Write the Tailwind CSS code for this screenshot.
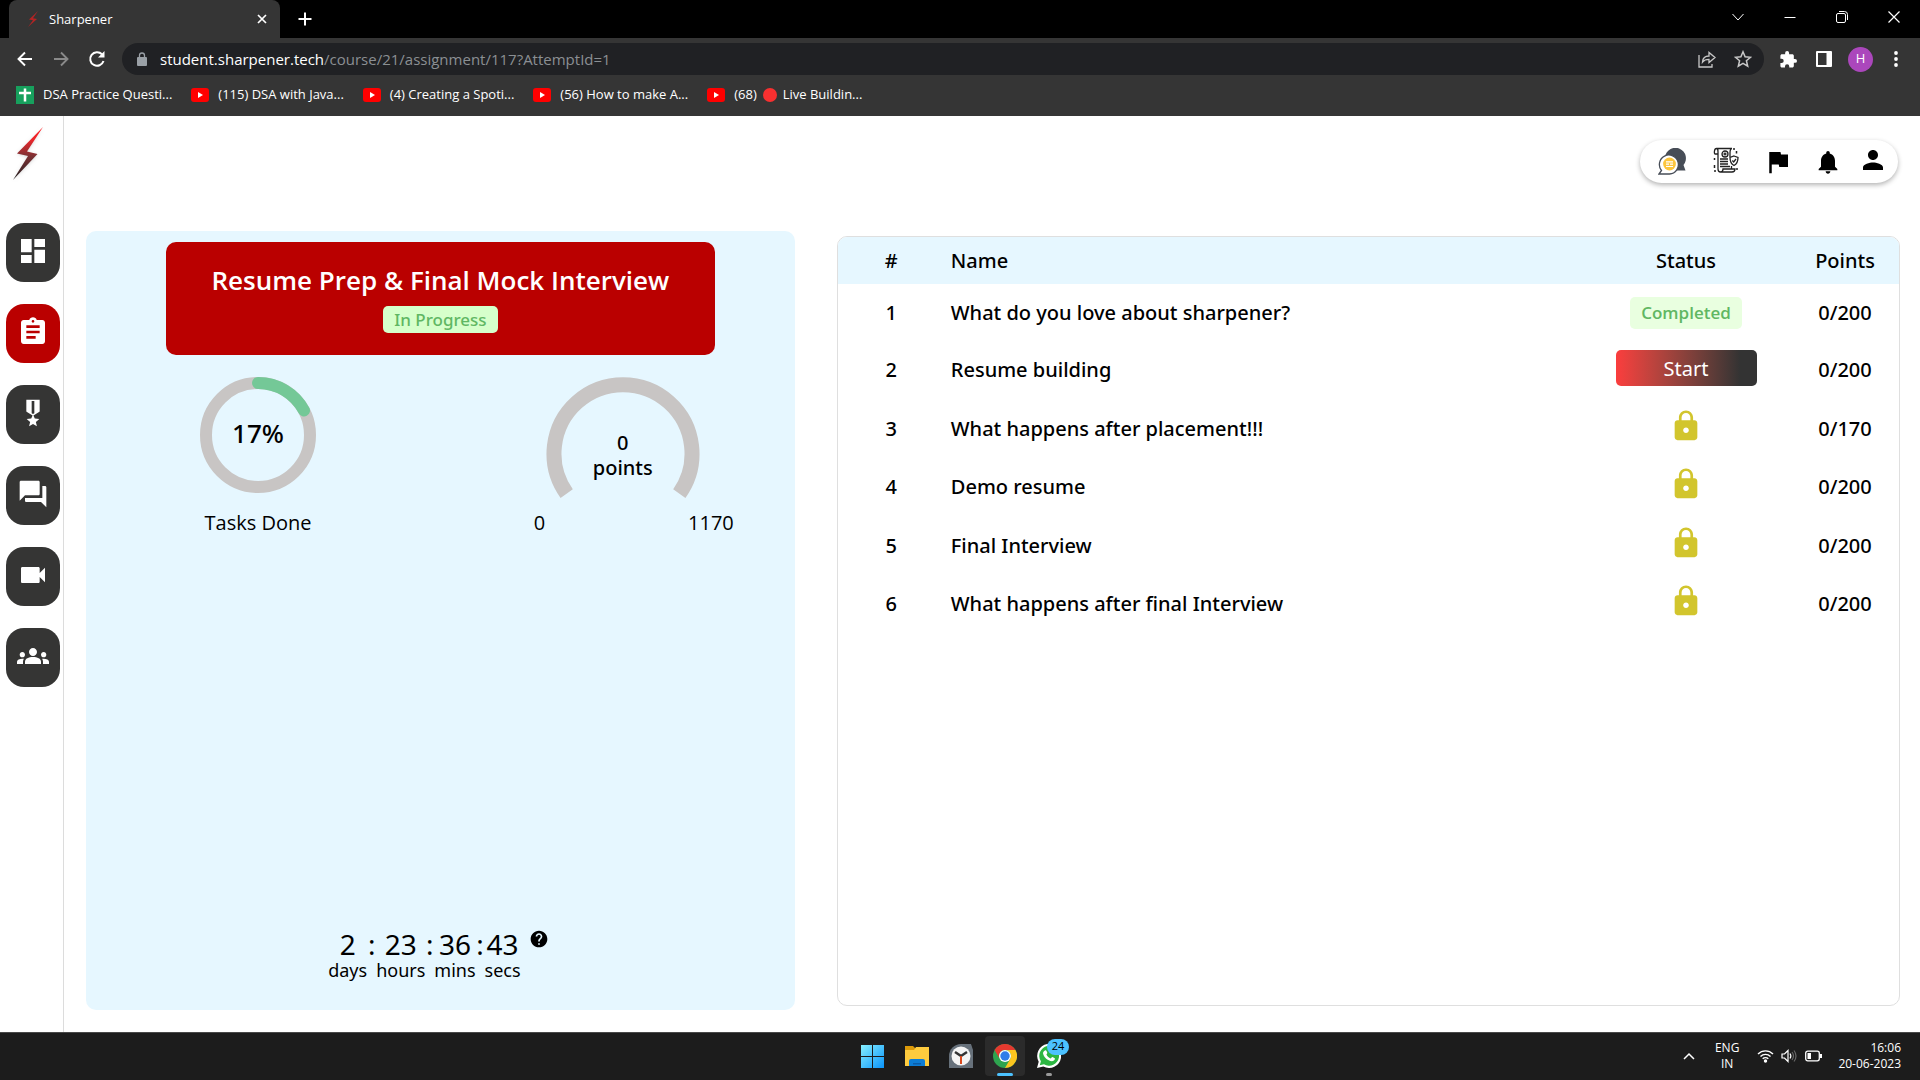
<!DOCTYPE html>
<html lang="en">
<head>
<meta charset="utf-8">
<title>Sharpener</title>
<script src="https://cdn.jsdelivr.net/npm/@tailwindcss/browser@4"></script>
</head>
<body class="flex h-screen flex-col overflow-hidden bg-white font-['Open_Sans','Noto_Sans',sans-serif] text-black">
<svg class="hidden" aria-hidden="true">
  <symbol id="yt" viewBox="0 0 18 14"><rect width="18" height="14" rx="3" fill="#f00"/><path d="M7 4v6l5-3z" fill="#fff"/></symbol>
  <symbol id="lock" viewBox="0 0 24 24"><path d="M18 8h-1V6c0-2.760-2.240-5-5-5S7 3.240 7 6v2H6c-1.100 0-2 .9-2 2v10c0 1.100.9 2 2 2h12c1.100 0 2-.9 2-2V10c0-1.100-.9-2-2-2zm-6 9c-1.100 0-2-.9-2-2s.9-2 2-2 2 .9 2 2-.9 2-2 2zm3.100-9H8.900V6c0-1.710 1.390-3.100 3.100-3.100s3.100 1.390 3.100 3.100v2z"/></symbol>
</svg>

<!-- Browser window -->
<header class="shrink-0 bg-[#353535] text-white">
  <div class="flex h-[38px] items-stretch bg-black pl-[9px]">
    <div class="flex w-[271px] items-center rounded-t-lg bg-[#353535] pl-[18px] pr-[12px]">
      <svg class="h-[18px] w-3" viewBox="0 0 12 18"><path d="M11 1 2 9.500l4 .8L1 17l9-8-4-.8z" fill="#b32424"/></svg>
      <span class="ml-[10px] flex-1 pt-px text-[13px]">Sharpener</span>
      <button aria-label="Close tab"><svg class="size-3" viewBox="0 0 12 12" fill="none" stroke="#fff" stroke-width="1.700"><path d="m2 2 8 8m0-8-8 8"/></svg></button>
    </div>
    <button aria-label="New tab" class="ml-[17px]"><svg class="size-4" viewBox="0 0 16 16" stroke="#fff" stroke-width="2"><path d="M8 1.500v13M1.500 8h13"/></svg></button>
    <div class="ml-auto flex items-center gap-10 pb-[5px] pr-5">
      <button aria-label="Search tabs"><svg class="size-3" viewBox="0 0 12 12" fill="none" stroke="#fff"><path d="m.5 3 5.500 6 5.500-6"/></svg></button>
      <button aria-label="Minimize"><svg class="size-3" viewBox="0 0 12 12" stroke="#fff"><path d="M.5 6.500h11"/></svg></button>
      <button aria-label="Restore"><svg class="size-3" viewBox="0 0 12 12" fill="none" stroke="#fff"><rect x=".5" y="2.500" width="9" height="9" rx="1.500"/><path d="M3 .5h5.500a3 3 0 0 1 3 3V9"/></svg></button>
      <button aria-label="Close"><svg class="size-3" viewBox="0 0 12 12" stroke="#fff" stroke-width="1.200"><path d="m.5.5 11 11m0-11-11 11"/></svg></button>
    </div>
  </div>
  <div class="flex h-[42px] items-center pl-[15px] pr-[16px]">
    <button aria-label="Back" class="mr-4"><svg class="size-5" viewBox="0 0 20 20" fill="none" stroke="#fff" stroke-width="1.900"><path d="M17 10H4M10 3.500 3.500 10l6.500 6.500"/></svg></button>
    <button aria-label="Forward" class="mr-4"><svg class="size-5" viewBox="0 0 20 20" fill="none" stroke="#8a8a8a" stroke-width="1.900"><path d="M3 10h13M10 3.500l6.500 6.500-6.500 6.500"/></svg></button>
    <button aria-label="Reload" class="mr-[15px]"><svg class="size-5" viewBox="0 0 20 20" fill="none" stroke="#fff" stroke-width="2"><path d="M16.500 12A6.800 6.800 0 1 1 15 5.300"/><path d="M17.500 2v6.500H11z" fill="#fff" stroke="none"/></svg></button>
    <div class="flex h-8 flex-1 items-center rounded-full bg-[#202124] pl-[15px] pr-3">
      <svg class="mr-[13px] h-[14px] w-[10px]" viewBox="0 0 10 14"><path d="M2.500 6V3.500a2.500 2.500 0 0 1 5 0V6" fill="none" stroke="#9aa0a6" stroke-width="1.300"/><rect y="5" width="10" height="9" rx="1" fill="#9aa0a6"/></svg>
      <p class="flex-1 text-[15px] text-[#8b8f93]"><span class="text-white">student.sharpener.tech</span>/course/21/assignment/117?AttemptId=1</p>
      <button aria-label="Share" class="mr-[18px]"><svg class="size-[18px]" viewBox="0 0 18 18" fill="none" stroke="#c8c8c8" stroke-width="1.300"><path d="M1 5v12h13v-3M4.500 12c.3-4 2.500-6 6.500-6V2.500l6 5-6 5V9.300c-3 0-5 .7-6.500 2.700z"/></svg></button>
      <button aria-label="Bookmark this page"><svg class="size-[18px]" viewBox="0 0 18 18" fill="none" stroke="#c8c8c8" stroke-width="1.500"><path d="m9 1.800 2.100 5 5.400.5-4.100 3.500 1.300 5.300L9 13.300l-4.700 2.800 1.300-5.300-4.100-3.500 5.400-.5z"/></svg></button>
    </div>
    <button aria-label="Extensions" class="ml-4"><svg class="size-[17px]" viewBox="1.500 1 21.500 21.500" fill="#fff"><path d="M20.500 11H19V7c0-1.100-.9-2-2-2h-4V3.500a2.500 2.500 0 0 0-5 0V5H4c-1.100 0-2 .9-2 2v3.800h1.500a2.700 2.700 0 0 1 0 5.400H2V20c0 1.100.9 2 2 2h3.800v-1.500a2.700 2.700 0 0 1 5.400 0V22H17c1.100 0 2-.9 2-2v-4h1.500a2.500 2.500 0 0 0 0-5z"/></svg></button>
    <button aria-label="Side panel" class="ml-[19px]"><svg class="size-4" viewBox="0 0 16 16"><rect width="16" height="16" rx="1" fill="#fff"/><rect x="2" y="2" width="8.500" height="12" fill="#353535"/></svg></button>
    <button aria-label="Profile" class="ml-4 flex size-[25px] items-center justify-center rounded-full bg-[#ab47bc] text-[13px]">H</button>
    <button aria-label="Menu" class="ml-[15px]"><svg class="size-4" viewBox="0 0 16 16" fill="#fff"><circle cx="8" cy="2" r="1.900"/><circle cx="8" cy="8" r="1.900"/><circle cx="8" cy="14" r="1.900"/></svg></button>
  </div>
  <nav aria-label="Bookmarks" class="flex h-9 items-center gap-[19px] pb-1.5 pl-4 text-[13px]">
    <a href="#" class="flex items-center gap-[9px]"><svg class="size-[18px]" viewBox="0 0 18 18"><path fill="#17a05d" d="M0 0h18v18H0z"/><path d="M9 2.500v13M3 7h12" stroke="#fff" stroke-width="2.500"/></svg>DSA Practice Questi...</a>
    <a href="#" class="flex items-center gap-[9px]"><svg class="h-[14px] w-[18px]"><use href="#yt"/></svg>(115) DSA with Java...</a>
    <a href="#" class="flex items-center gap-[9px]"><svg class="h-[14px] w-[18px]"><use href="#yt"/></svg>(4) Creating a Spoti...</a>
    <a href="#" class="flex items-center gap-[9px]"><svg class="h-[14px] w-[18px]"><use href="#yt"/></svg>(56) How to make A...</a>
    <a href="#" class="flex items-center gap-[9px]"><svg class="h-[14px] w-[18px]"><use href="#yt"/></svg><span class="flex items-center gap-1.5">(68) <i class="size-[14px] rounded-full bg-[#f83030]"></i> Live Buildin...</span></a>
  </nav>
</header>

<div class="flex min-h-0 flex-1">
  <aside class="w-16 shrink-0 border-r border-[#dcdcdc] pl-1.5">
    <a href="#" aria-label="Sharpener home"><svg class="mb-[41px] ml-[6px] mt-[10px] h-14 w-8 drop-shadow" viewBox="0 0 32 56"><defs><linearGradient id="bolt" x1="0" y1="0" x2="0" y2="1"><stop stop-color="#ff1a1f"/><stop offset=".25" stop-color="#e8262b"/><stop offset=".55" stop-color="#7c3033"/><stop offset="1" stop-color="#222"/></linearGradient></defs><path d="M31 1 5 27.500l11 2.500L1 54l24.500-26L15 25.500z" fill="url(#bolt)"/></svg></a>
    <nav aria-label="Main" class="flex flex-col gap-[22px]">
      <a href="#" aria-label="Dashboard" class="flex h-[59px] w-[54px] items-center justify-center rounded-[18px] bg-[#353534] pb-[3px]"><svg class="size-8" viewBox="0 0 24 24" fill="#fff"><path d="M3 13h8V3H3v10zm0 8h8v-6H3v6zm10 0h8V11h-8v10zm0-18v6h8V3h-8z"/></svg></a>
      <a href="#" aria-label="Assignments" class="flex h-[59px] w-[54px] items-center justify-center rounded-[18px] bg-[#ba0000] pb-[3px]"><svg class="size-8" viewBox="0 0 24 24" fill="#fff"><path d="M19 3h-4.180C14.400 1.840 13.300 1 12 1c-1.300 0-2.400.84-2.820 2H5c-1.100 0-2 .9-2 2v14c0 1.100.9 2 2 2h14c1.100 0 2-.9 2-2V5c0-1.100-.9-2-2-2zm-7 0c.55 0 1 .45 1 1s-.45 1-1 1-1-.45-1-1 .45-1 1-1zm2 14H7v-2h7v2zm3-4H7v-2h10v2zm0-4H7V7h10v2z"/></svg></a>
      <a href="#" aria-label="Achievements" class="flex h-[59px] w-[54px] items-center justify-center rounded-[18px] bg-[#353534] pb-[3px]"><svg class="size-8" viewBox="0 0 24 24" fill="#fff"><path d="M17 10.430V2H7v8.430c0 .35.18.68.49.86l4.180 2.510-.99 2.340-3.410.29 2.590 2.240L9.070 22 12 20.230 14.930 22l-.78-3.330 2.590-2.240-3.410-.29-.99-2.340 4.180-2.510c.3-.18.48-.5.48-.86zm-4 1.800-1 .6-1-.6V3h2v9.230z"/></svg></a>
      <a href="#" aria-label="Forum" class="flex h-[59px] w-[54px] items-center justify-center rounded-[18px] bg-[#353534] pb-[3px]"><svg class="size-8" viewBox="0 0 24 24" fill="#fff"><path d="M21 6h-2v9H6v2c0 .55.45 1 1 1h11l4 4V7c0-.55-.45-1-1-1zm-4 6V3c0-.55-.45-1-1-1H3c-.55 0-1 .45-1 1v14l4-4h10c.55 0 1-.45 1-1z"/></svg></a>
      <a href="#" aria-label="Video calls" class="flex h-[59px] w-[54px] items-center justify-center rounded-[18px] bg-[#353534] pb-[3px]"><svg class="size-8" viewBox="0 0 24 24" fill="#fff"><path d="M17 10.500V7c0-.55-.45-1-1-1H4c-.55 0-1 .45-1 1v10c0 .55.45 1 1 1h12c.55 0 1-.45 1-1v-3.500l4 4v-11l-4 4z"/></svg></a>
      <a href="#" aria-label="Groups" class="flex h-[59px] w-[54px] items-center justify-center rounded-[18px] bg-[#353534] pb-[3px]"><svg class="size-8" viewBox="0 0 24 24" fill="#fff"><path d="M12 12.750c1.630 0 3.070.39 4.240.9 1.080.48 1.760 1.560 1.760 2.730V18H6v-1.610c0-1.180.68-2.260 1.760-2.730 1.170-.52 2.610-.91 4.240-.91zM4 13c1.100 0 2-.9 2-2s-.9-2-2-2-2 .9-2 2 .9 2 2 2zm1.130 1.100c-.37-.06-.74-.1-1.130-.1-.99 0-1.930.21-2.780.58C.48 14.900 0 15.620 0 16.430V18h4.500v-1.610c0-.83.23-1.610.63-2.290zM20 13c1.100 0 2-.9 2-2s-.9-2-2-2-2 .9-2 2 .9 2 2 2zm4 3.430c0-.81-.48-1.530-1.220-1.850-.85-.37-1.790-.58-2.780-.58-.39 0-.76.04-1.130.1.4.68.63 1.460.63 2.290V18H24v-1.570zM12 6c1.660 0 3 1.340 3 3s-1.340 3-3 3-3-1.340-3-3 1.340-3 3-3z"/></svg></a>
    </nav>
  </aside>

  <main class="flex min-w-0 flex-1 flex-col pb-[22px] pl-[22px] pr-5 pt-6">
    <div class="mb-12 ml-auto mr-0.5 flex h-[43px] w-[258px] items-center rounded-full bg-white pl-[18px] shadow-[0_2px_5px_rgba(0,0,0,0.3)]">
      <button aria-label="Messages" class="mr-[27px]"><svg class="size-7" viewBox="0 0 28 28"><path d="M7 9A10.500 10.500 0 1 1 25.500 17l2 5.500H17z" fill="#474d57"/><path d="M1 26l2.500-3.500A9.500 9.500 0 1 1 11.500 26z" fill="#fff" stroke="#474d57" stroke-width="1.300"/><circle cx="11.500" cy="16" r="6.400" fill="#fcc53c"/><path d="M8 13.800h7M8 16.200h3m1 0h3M8 18.500h7" stroke="#fff" stroke-width="1.200"/></svg></button>
      <button aria-label="Certificates" class="mr-6 pb-1"><svg class="size-[26px]" viewBox="0 0 26 26" fill="none" stroke="#222" stroke-width="1.300"><path d="M5 7H2C1 7 1 1.500 3.500 1.500H19C17 1.500 17 4 17 6v4M3.500 1.500C5 1.500 5 3 5 5v17c0 2 1 3 2.500 3H19c2.500 0 3-1.500 3-3H10c0 2-1 3-2.500 3M18.500 19v3"/><circle cx="12" cy="7" r="3"/><path d="M10.500 7h3M12 5.500v3"/><path d="M7 12h8M7 14.500h8M7 17h8M7 19.500h10" stroke-width="1.500"/><path d="m21 9 4 1.500c0 4-1 6.500-4 8-3-1.500-4-4-4-8z" fill="#fff"/><path d="m19.300 13.500 1.400 1.500 2.300-3"/><path d="M21 1v2m2.500 1v2.500M1.500 11v2m0 5v3M24 21v2M1 24h2" stroke-width="1.500"/></svg></button>
      <button aria-label="Flags" class="mr-[21px]"><svg class="size-[30px]" viewBox="0 0 24 24"><path d="M14.400 6 14 4H5v17h2v-7h5.600l.4 2h7V6z"/></svg></button>
      <button aria-label="Notifications" class="mr-4"><svg class="size-7" viewBox="0 0 24 24"><path d="M12 22c1.100 0 2-.9 2-2h-4c0 1.100.89 2 2 2zm6-6v-5c0-3.070-1.640-5.640-4.500-6.320V4c0-.83-.67-1.500-1.500-1.500s-1.500.67-1.500 1.500v.68C7.630 5.360 6 7.920 6 11v5l-2 2v1h16v-1l-2-2z"/></svg></button>
      <button aria-label="Account" class="pb-1"><svg class="size-[30px]" viewBox="0 0 24 24"><path d="M12 12c2.210 0 4-1.790 4-4s-1.790-4-4-4-4 1.790-4 4 1.790 4 4 4zm0 2c-2.670 0-8 1.340-8 4v2h16v-2c0-2.660-5.330-4-8-4z"/></svg></button>
    </div>

    <div class="grid min-h-0 flex-1 grid-cols-[2fr_3fr] gap-[42px]">
      <section class="flex flex-col rounded-[10px] bg-[#e6f7ff] pt-[11px]">
        <div class="mx-auto flex h-[113px] w-[549px] flex-col items-center rounded-[10px] bg-[#ba0000] pt-5">
          <h1 class="text-[26px] font-semibold leading-9 text-white">Resume Prep &amp; Final Mock Interview</h1>
          <span class="mt-2 flex h-[27px] items-center rounded-[5px] bg-[#d6ffcb] px-[11px] font-['Noto_Sans',sans-serif] text-[17px] font-medium text-[#60b763]">In Progress</span>
        </div>
        <div class="mt-[22px] flex justify-between pl-[114px] pr-[61px]">
          <div class="flex flex-col items-center">
            <div class="grid size-[116px] place-items-center">
              <svg class="col-start-1 row-start-1 size-[116px]" viewBox="0 0 116 116" fill="none" stroke-width="12"><circle cx="58" cy="58" r="52" stroke="#c8c5c4"/><path d="M58 6A52 52 0 0 1 104 33.500" stroke="#74c897" stroke-linecap="round"/></svg>
              <span class="col-start-1 row-start-1 pb-1 font-['Noto_Sans',sans-serif] text-[26px] font-medium">17%</span>
            </div>
            <p class="mt-3.5 text-[20px] leading-8">Tasks Done</p>
          </div>
          <div class="flex w-[200px] flex-col">
            <div class="ml-3 grid h-[130px] w-[154px] justify-items-center">
              <svg class="col-start-1 row-start-1 h-[130px] w-[154px]" viewBox="0 0 154 130" fill="none"><path d="M20.700 116.600A69 69 0 1 1 133.300 116.600" stroke="#c8c5c4" stroke-width="15"/></svg>
              <p class="col-start-1 row-start-1 mt-[53px] text-center font-['Noto_Sans',sans-serif] text-[20px] font-medium leading-[25px]">0<br>points</p>
            </div>
            <div class="flex justify-between text-[20px] leading-8"><span>0</span><span>1170</span></div>
          </div>
        </div>
        <div class="mb-[29px] mr-1 mt-auto flex justify-center gap-2 font-['Noto_Sans',sans-serif]">
          <div class="grid grid-cols-[auto_9px_auto_9px_auto_9px_auto] justify-items-center text-[18px] leading-[22px]">
            <span class="text-[28px] leading-[30px]">2</span>
            <span class="text-[28px] leading-[30px]">:</span>
            <span class="text-[28px] leading-[30px]">23</span>
            <span class="text-[28px] leading-[30px]">:</span>
            <span class="text-[28px] leading-[30px]">36</span>
            <span class="text-[28px] leading-[30px]">:</span>
            <span class="text-[28px] leading-[30px]">43</span>
            <span class="col-start-1">days</span><span class="col-start-3">hours</span><span class="col-start-5">mins</span><span class="col-start-7">secs</span>
          </div>
          <button aria-label="Help" class="self-start"><svg class="size-5" viewBox="0 0 24 24"><path d="M12 2C6.480 2 2 6.480 2 12s4.480 10 10 10 10-4.480 10-10S17.520 2 12 2zm1 17h-2v-2h2v2zm2.070-7.750-.9.920C13.450 12.900 13 13.500 13 15h-2v-.5c0-1.100.45-2.100 1.170-2.830l1.240-1.260c.37-.36.59-.86.59-1.410 0-1.100-.9-2-2-2s-2 .9-2 2H8c0-2.210 1.790-4 4-4s4 1.790 4 4c0 .88-.36 1.680-.93 2.250z"/></svg></button>
        </div>
      </section>

      <section class="mb-1 mt-[5px] overflow-hidden rounded-[10px] border border-[#dfdfdf]">
        <table class="w-full table-fixed font-['Noto_Sans',sans-serif] text-[20px] font-medium">
          <colgroup><col class="w-[113px]"><col><col class="w-[210px]"><col class="w-[108px]"></colgroup>
          <thead class="bg-[#e6f7ff]"><tr class="h-[47px]"><th class="pr-1.5 font-medium">#</th><th class="text-left font-medium">Name</th><th class="font-medium">Status</th><th class="font-medium">Points</th></tr></thead>
          <tbody class="text-center">
            <tr class="h-[57px]"><td class="pr-1.5">1</td><td class="text-left">What do you love about sharpener?</td><td><span class="inline-flex h-8 items-center rounded-[5px] bg-[#e9ffe0] px-[11px] font-['Open_Sans',sans-serif] text-[17px] font-semibold text-[#60b763]">Completed</span></td><td>0/200</td></tr>
            <tr class="h-[58px]"><td class="pr-1.5">2</td><td class="text-left">Resume building</td><td class="pb-1"><button class="mx-auto block h-9 w-[141px] rounded-[5px] bg-linear-to-r from-[#fb3d3d] to-[#333] to-88% pt-0.5 font-normal text-white">Start</button></td><td>0/200</td></tr>
            <tr class="h-[59px]"><td class="pr-1.5">3</td><td class="text-left">What happens after placement!!!</td><td class="pb-1.5"><svg class="mx-auto size-[34px] fill-[#d2c52d]" role="img" aria-label="Locked"><use href="#lock"/></svg></td><td>0/170</td></tr>
            <tr class="h-[58px]"><td class="pr-1.5">4</td><td class="text-left">Demo resume</td><td class="pb-1.5"><svg class="mx-auto size-[34px] fill-[#d2c52d]" role="img" aria-label="Locked"><use href="#lock"/></svg></td><td>0/200</td></tr>
            <tr class="h-[59px]"><td class="pr-1.5">5</td><td class="text-left">Final Interview</td><td class="pb-1.5"><svg class="mx-auto size-[34px] fill-[#d2c52d]" role="img" aria-label="Locked"><use href="#lock"/></svg></td><td>0/200</td></tr>
            <tr class="h-[58px]"><td class="pr-1.5">6</td><td class="text-left">What happens after final Interview</td><td class="pb-1.5"><svg class="mx-auto size-[34px] fill-[#d2c52d]" role="img" aria-label="Locked"><use href="#lock"/></svg></td><td>0/200</td></tr>
          </tbody>
        </table>
      </section>
    </div>
  </main>
</div>

<!-- Taskbar -->
<footer class="grid h-12 shrink-0 grid-cols-[1fr_auto_1fr] items-center border-t border-[#484848] bg-[#1c1c1c] pb-0.5 text-white">
  <div></div>
  <div class="flex gap-1 pl-0.5">
    <button aria-label="Start" class="grid size-10 place-items-center"><svg class="size-6" viewBox="0 0 24 24"><defs><linearGradient id="win" x1="0" y1="0" x2="1" y2="1"><stop stop-color="#86f0ff"/><stop offset="1" stop-color="#0a94fb"/></linearGradient></defs><path d="M0 1h11v11H0zM12 1h11v11H12zM0 13h11v11H0zM12 13h11v11H12z" fill="url(#win)"/></svg></button>
    <button aria-label="File Explorer" class="grid size-10 place-items-center"><svg class="size-6" viewBox="0 0 24 24"><path d="M0 2h8l3 3v4H0z" fill="#dc9a0a"/><path d="M0 6h9l2-3h13v19H0z" fill="#fecb3e"/><path d="M4 22v-5q0-2 2-2h12q2 0 2 2v5z" fill="#0c7cd5"/><path d="M8 19h8v1.500H8z" fill="#0a5ca8"/></svg></button>
    <button aria-label="Clock" class="grid size-10 place-items-center"><svg class="size-6" viewBox="0 0 24 24"><path d="M0 12A12 12 0 0 1 12 0h10l2 6v18H0z" fill="#67717b"/><circle cx="12" cy="12" r="9.500" fill="#f4f4f4"/><path d="m6 8 6 4 6-4" fill="none" stroke="#333" stroke-width="2.500"/><path d="M12 12v8" stroke="#d9481c" stroke-width="2"/></svg></button>
    <button aria-label="Chrome" class="relative grid size-10 place-items-center rounded bg-[#2b2b2b]"><svg class="size-6" viewBox="0 0 24 24"><circle cx="12" cy="12" r="12" fill="#2ea44f"/><path d="M1.600 6A12 12 0 0 1 22.400 6H12a6 6 0 0 0-5.200 9z" fill="#e5392f"/><path d="M22.400 6A12 12 0 0 1 12 24l5.200-9A6 6 0 0 0 12 6z" fill="#fcc51f"/><circle cx="12" cy="12" r="6" fill="#fff"/><circle cx="12" cy="12" r="4.700" fill="#2f7de9"/></svg><i class="absolute bottom-0 h-[3px] w-4 rounded-full bg-[#4cc2ff]"></i></button>
    <button aria-label="WhatsApp, 24 unread" class="relative grid size-10 place-items-center"><svg class="size-6" viewBox="0 0 24 24"><path d="M0 24l1.700-6.200A12 12 0 1 1 6.300 22.400z" fill="#fff"/><path d="m2.800 21.200 1.100-4A9.900 9.900 0 1 1 7 20.200z" fill="#2cb742"/><path d="M8 6.500c1-.8 1.500 0 2.300 2.300.2.800-1 1.200-.8 1.900 1 2 2.300 3 4 3.700.8 0 1.200-1.600 2-1.300l2.300 1.200c.5.800-.5 2.700-2.800 3-4.500-.3-8.500-4.500-9-8 0-1 .8-2.300 2-2.800z" fill="#fff"/></svg><span class="absolute right-0 top-[3px] flex h-4 w-[22px] items-center justify-center rounded-full bg-[#4cc2ff] text-[11px] text-black">24</span><i class="absolute bottom-0 h-[3px] w-1.5 rounded-full bg-[#9a9a9a]"></i></button>
  </div>
  <div class="flex items-center justify-end pr-[19px] text-[12px] leading-4">
    <svg class="mr-[20px] size-3" viewBox="0 0 12 12" fill="none" stroke="#fff" stroke-width="1.500"><path d="m1 9 5-5 5 5"/></svg>
    <p class="mr-[18px] text-center">ENG<br>IN</p>
    <svg class="mr-[7px] size-[17px]" viewBox="0 0 17 17" fill="none" stroke="#fff" stroke-width="1.400"><path d="M1 7a10.500 10.500 0 0 1 15 0M3.500 9.500a7 7 0 0 1 10 0M5.700 11.800a4 4 0 0 1 5.600 0"/><circle cx="8.500" cy="14" r="1" fill="#fff"/></svg>
    <svg class="mr-[8px] size-4" viewBox="0 0 16 16" fill="none" stroke="#fff" stroke-width="1.200"><path d="M1 6h2.500L7 2.500v11L3.500 10H1zM9 5.500q1.700 2.500 0 5"/><path d="M11 4q3 4 0 8M13 2.500q4 5.500 0 11" stroke="#666"/></svg>
    <svg class="mr-4 h-3 w-[17px]" viewBox="0 0 17 12"><rect x=".7" y="1.200" width="13.600" height="9.600" rx="2" fill="none" stroke="#fff" stroke-width="1.300"/><path d="M2.500 3H6v6H2.500zM15 4h2v4h-2z" fill="#fff"/></svg>
    <p class="text-right">16:06<br>20-06-2023</p>
  </div>
</footer>
</body>
</html>
